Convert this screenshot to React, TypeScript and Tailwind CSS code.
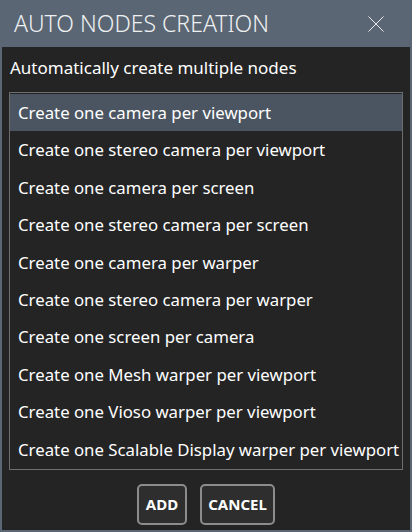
const OPTIONS = [
  "Create one camera per viewport",
  "Create one stereo camera per viewport",
  "Create one camera per screen",
  "Create one stereo camera per screen",
  "Create one camera per warper",
  "Create one stereo camera per warper",
  "Create one screen per camera",
  "Create one Mesh warper per viewport",
  "Create one Vioso warper per viewport",
  "Create one Scalable Display warper per viewport",
];

export default function App() {
  return (
    <div
      className="flex flex-col w-[412px] h-[532px] bg-[#5a6673] px-[2px] pb-[2px] overflow-hidden"
      style={{ fontFamily: '"Noto Sans", "Open Sans", sans-serif' }}
    >
      <header className="flex items-center justify-between h-[47px] pl-3 pr-[26px] shrink-0">
        <h1 className="font-light text-[23px] text-[#eef0f2]">AUTO NODES CREATION</h1>
        <svg width="16" height="16" viewBox="0 0 16 16" className="text-[#e8eaec]">
          <path d="M0.5 0.5L15.5 15.5M15.5 0.5L0.5 15.5" stroke="currentColor" strokeWidth="1" />
        </svg>
      </header>
      <div className="flex flex-col flex-1 bg-[#242424] px-[7px]">
        <p className="pt-[8px] pb-[12px] pl-[1px] text-[17px] leading-[25px] text-white">
          Automatically create multiple nodes
        </p>
        <ul className="flex flex-col border border-[#6e6e6e] py-[1px]">
          {OPTIONS.map((opt, i) => (
            <li
              key={opt}
              className={
                i === 0
                  ? "flex items-center h-[37.4px] px-2 bg-[#4b5561] text-white text-[16.8px] whitespace-nowrap"
                  : "flex items-center h-[37.4px] px-2 text-white text-[16.8px] whitespace-nowrap"
              }
            >
              {opt}
            </li>
          ))}
        </ul>
        <div className="flex justify-center gap-[13px] pt-[14px]">
          <button className="w-[50px] h-[41px] rounded-[5px] border-2 border-[#8c8c8c] bg-[#2e2e2e] text-white font-bold text-[15px]">
            ADD
          </button>
          <button className="w-[75px] h-[41px] rounded-[5px] border-2 border-[#8c8c8c] bg-[#2e2e2e] text-white font-bold text-[15px]">
            CANCEL
          </button>
        </div>
      </div>
    </div>
  );
}
